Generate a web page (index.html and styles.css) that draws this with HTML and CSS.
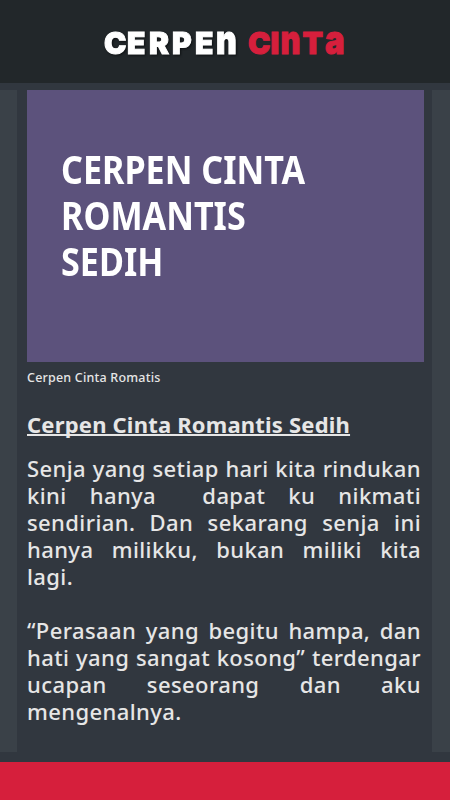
FILE: index.html
```
<!DOCTYPE html>
<html lang="id">

<head>
    <meta charset="UTF-8">
    <meta name="viewport" content="width=device-width, initial-scale=1.0">
    <title>Cerpen Cinta</title>
    <link rel="stylesheet" href="styles.css">
</head>

<body>
    <header class="topbar">
        <svg class="logo" width="250" height="60" viewBox="0 0 250 60" aria-label="Cerpen Cinta">
            <g class="logo-white">
                <text y="40" x="4 27 49 72 95">CERPE</text>
                <text class="small" transform="translate(116 40) scale(0.8 1)">n</text>
            </g>
            <g class="logo-red">
                <text y="40" x="148 170.5">CI</text>
                <text class="small" transform="translate(180.5 40) scale(0.77 1)">n</text>
                <text y="40" x="202.5">T</text>
                <text class="small" transform="translate(225 40) scale(0.82 1)">a</text>
            </g>
        </svg>
    </header>

    <main class="page">
        <article class="story">
            <div class="cover">
                <h1 class="cover-title">
                    <span class="cover-line">CERPEN CINTA</span>
                    <span class="cover-line">ROMANTIS</span>
                    <span class="cover-line">SEDIH</span>
                </h1>
            </div>
            <p class="caption">Cerpen Cinta Romatis</p>
            <h2 class="heading">Cerpen Cinta Romantis Sedih</h2>
            <p class="text">
                <span class="line">Senja yang setiap hari kita rindukan</span>
                <span class="line">kini hanya &nbsp;dapat ku nikmati</span>
                <span class="line">sendirian. Dan sekarang senja ini</span>
                <span class="line">hanya milikku, bukan miliki kita</span>
                <span class="line last">lagi.</span>
            </p>
            <p class="text">
                <span class="line">“Perasaan yang begitu hampa, dan</span>
                <span class="line">hati yang sangat kosong” terdengar</span>
                <span class="line">ucapan seseorang dan aku</span>
                <span class="line last">mengenalnya.</span>
            </p>
        </article>
    </main>

    <footer class="bottombar"></footer>
</body>

</html>
```
FILE: styles.css
```
* {
    box-sizing: border-box;
}

body {
    display: flex;
    flex-direction: column;
    height: 100vh;
    margin: 0;
    overflow: hidden;
    background: #31373f;
    color: #e6e6e6;
    font-family: "Noto Sans", sans-serif;
}

.topbar {
    display: flex;
    justify-content: center;
    flex: 0 0 83px;
    padding-top: 14px;
    background: #22272a;
}

.logo {
    overflow: visible;
    font-family: Inter, sans-serif;
    font-size: 30px;
    font-weight: 900;
    stroke-width: 1px;
    stroke-linejoin: miter;
}

.logo .small {
    font-size: 40px;
}

.logo-white {
    fill: #fff;
    stroke: #fff;
    filter: drop-shadow(1px 1px 1px #0c0f11);
}

.logo-red {
    fill: #d61f3c;
    stroke: #d61f3c;
}

.page {
    flex: 1;
    padding: 7px 0 10px;
}

/* lighter strips on both sides of the story */
.story {
    height: 662px;
    padding: 0 9px 0 10px;
    border: solid #3a4148;
    border-width: 0 18px 0 17px;
}

.cover {
    width: 397px;
    height: 272px;
    padding: 56px 0 0 34px;
    background: #5c527c;
}

.cover-title {
    margin: 0;
    color: #fff;
    font-size: 39px;
    font-weight: 700;
    line-height: 46px;
    white-space: nowrap;
    transform: scaleX(0.875);
    transform-origin: left;
}

.cover-line {
    display: block;
}

.caption {
    margin: 7px 0 0;
    font-size: 12.5px;
    font-weight: 500;
    letter-spacing: 0.2px;
    line-height: 18px;
}

.heading {
    margin: 22px 0 0;
    font-size: 22px;
    font-weight: 700;
    letter-spacing: 0.2px;
    line-height: 30px;
    text-decoration: underline;
    text-decoration-thickness: 2px;
    text-underline-offset: 1px;
    text-decoration-skip-ink: none;
    white-space: nowrap;
}

.text {
    width: 394px;
    margin: 16px 0 0;
    font-size: 22px;
    font-weight: 500;
    letter-spacing: 0.4px;
    line-height: 27px;
}

.text + .text {
    margin-top: 27px;
}

.line {
    display: block;
    text-align-last: justify;
    white-space: nowrap;
}

.line.last {
    text-align-last: left;
}

.bottombar {
    flex: 0 0 38px;
    background: #d61f3c;
}
```
